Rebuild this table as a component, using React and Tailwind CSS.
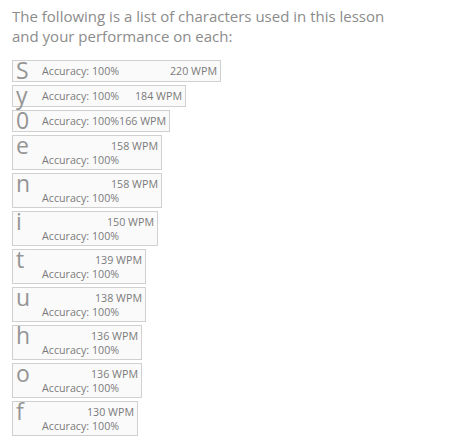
import React from 'react';

const rows = [
    { ch: 'S', wpm: 220, w: 'w-[209px]', one: true },
    { ch: 'y', wpm: 184, w: 'w-[174px]', one: true },
    { ch: '0', wpm: 166, w: 'w-[158px]', one: true },
    { ch: 'e', wpm: 158, w: 'w-[150px]' },
    { ch: 'n', wpm: 158, w: 'w-[150px]' },
    { ch: 'i', wpm: 150, w: 'w-[146px]' },
    { ch: 't', wpm: 139, w: 'w-[134px]' },
    { ch: 'u', wpm: 138, w: 'w-[134px]' },
    { ch: 'h', wpm: 136, w: 'w-[130px]' },
    { ch: 'o', wpm: 136, w: 'w-[130px]' },
    { ch: 'f', wpm: 130, w: 'w-[126px]' },
];

const CharRow = ({ row }) => (
    <div className={`${row.w} ${row.one ? 'h-[22px]' : 'h-[35px]'} mb-[3px] flex border border-[#d0d0d0] bg-[#fafafa]`}>
        <div className="w-[29px] shrink-0 pl-[3px] text-[23px] leading-[19px] text-[#959595]">{row.ch}</div>
        {row.one ? (
            <div className="flex-1 flex items-center justify-between pr-[3px] text-[10.7px] whitespace-nowrap text-[#7a7a7a]">
                <span>Accuracy: 100%</span>
                <span>{row.wpm} WPM</span>
            </div>
        ) : (
            <div className="flex-1 flex flex-col pr-[3px] pt-[3px] text-[10.7px] leading-[14px] whitespace-nowrap text-[#7a7a7a]">
                <span className="self-end">{row.wpm} WPM</span>
                <span>Accuracy: 100%</span>
            </div>
        )}
    </div>
);

const App = () => {
    return (
        <div className="w-[450px] h-[437px] overflow-hidden bg-white px-[12px] pt-[6px]" style={{ fontFamily: '"Open Sans", sans-serif' }}>
            <p className="text-[15px] leading-[20px] text-[#8c8c8c] mb-[14px]">
                The following is a list of characters used in this lesson<br />
                and your performance on each:
            </p>
            <div>
                {rows.map(row => <CharRow key={row.ch} row={row} />)}
            </div>
        </div>
    );
};
export default App;
